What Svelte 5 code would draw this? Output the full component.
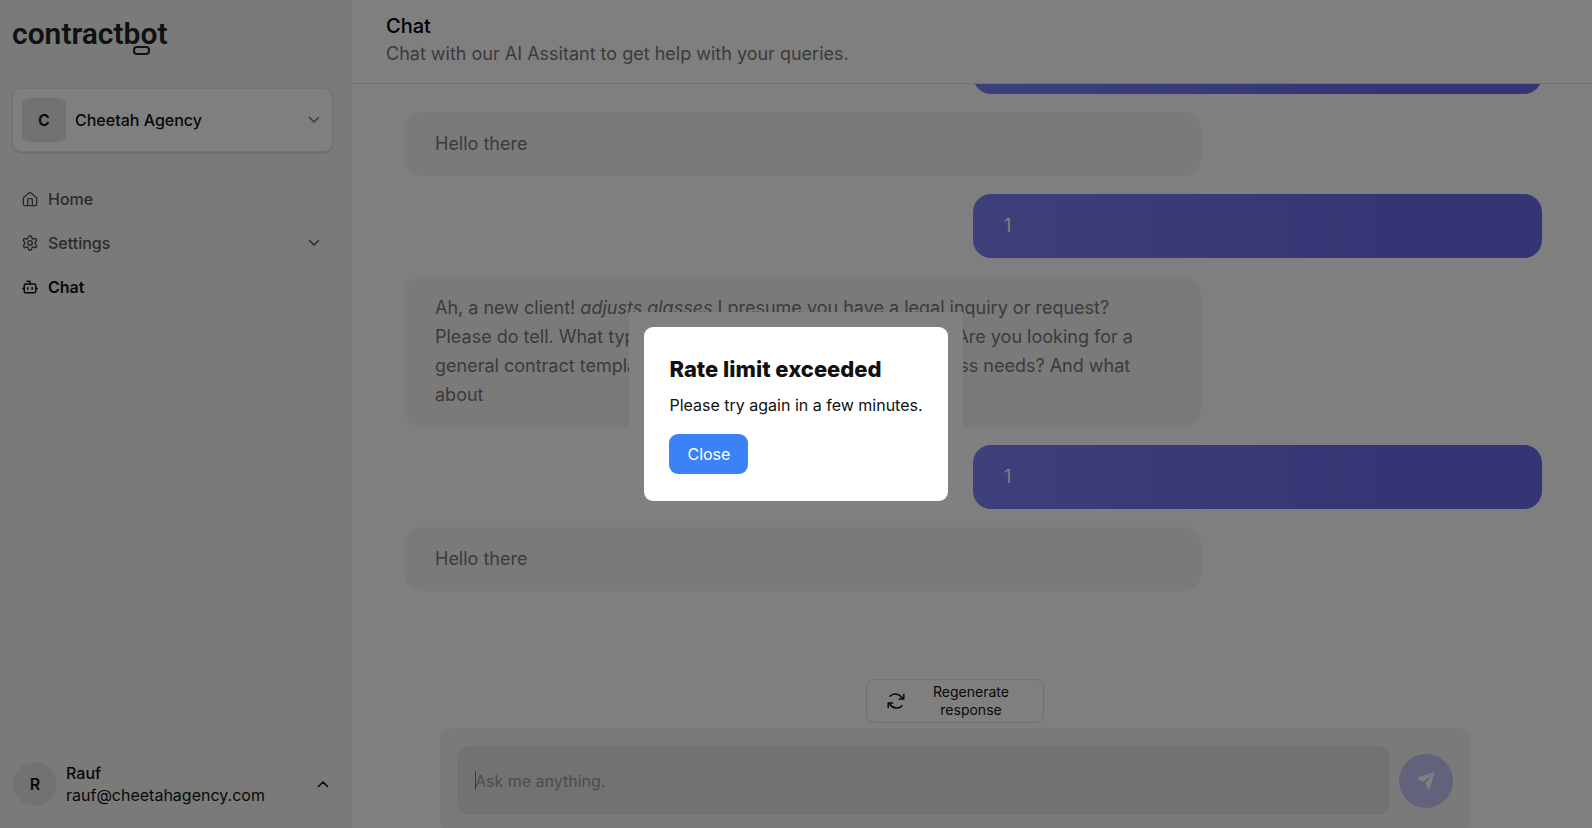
<script lang="ts">
  interface Message {
    from: 'bot' | 'user';
    text: string;
    emphasis?: string;
    rest?: string;
  }

  const messages: Message[] = [
    { from: 'user', text: '1' },
    { from: 'bot', text: 'Hello there' },
    { from: 'user', text: '1' },
    {
      from: 'bot',
      text: 'Ah, a new client! ',
      emphasis: 'adjusts glasses',
      rest: ' I presume you have a legal inquiry or request? Please do tell. What type of agreement do you need drafted? Are you looking for a general contract template or one tailored to your exact business needs? And what about'
    },
    { from: 'user', text: '1' },
    { from: 'bot', text: 'Hello there' }
  ];

  let prompt = '';
  let limited = true;
</script>

<div class="app">
  <aside class="sidebar">
    <a class="logo" href="/">contractb<span class="logo-face">o</span>t</a>

    <button class="agency" type="button">
      <span class="agency-badge">C</span>
      <span class="agency-name">Cheetah Agency</span>
      <svg class="chevron" viewBox="0 0 12 12"><path d="M1.5 3.5 6 8l4.5-4.5" /></svg>
    </button>

    <nav>
      <a class="nav-item" href="/home">
        <svg viewBox="0 0 24 24">
          <path d="M2 10.2 12 1.8l10 8.4V20a2 2 0 0 1-2 2H4a2 2 0 0 1-2-2z" />
          <path d="M8.5 22v-9a1.5 1.5 0 0 1 1.5-1.5h4a1.5 1.5 0 0 1 1.5 1.5v9" />
        </svg>
        <span>Home</span>
      </a>
      <a class="nav-item" href="/settings">
        <svg viewBox="1 1 22 22">
          <path
            d="M12.22 2h-.44a2 2 0 0 0-2 2v.18a2 2 0 0 1-1 1.73l-.43.25a2 2 0 0 1-2 0l-.15-.08a2 2 0 0 0-2.73.73l-.22.38a2 2 0 0 0 .73 2.73l.15.1a2 2 0 0 1 1 1.72v.51a2 2 0 0 1-1 1.74l-.15.09a2 2 0 0 0-.73 2.73l.22.38a2 2 0 0 0 2.73.73l.15-.08a2 2 0 0 1 2 0l.43.25a2 2 0 0 1 1 1.73V20a2 2 0 0 0 2 2h.44a2 2 0 0 0 2-2v-.18a2 2 0 0 1 1-1.73l.43-.25a2 2 0 0 1 2 0l.15.08a2 2 0 0 0 2.73-.73l.22-.39a2 2 0 0 0-.73-2.73l-.15-.08a2 2 0 0 1-1-1.74v-.5a2 2 0 0 1 1-1.74l.15-.09a2 2 0 0 0 .73-2.73l-.22-.38a2 2 0 0 0-2.73-.73l-.15.08a2 2 0 0 1-2 0l-.43-.25a2 2 0 0 1-1-1.73V4a2 2 0 0 0-2-2z"
          />
          <circle cx="12" cy="12" r="3" />
        </svg>
        <span>Settings</span>
        <svg class="chevron" viewBox="0 0 12 12"><path d="M1.5 3.5 6 8l4.5-4.5" /></svg>
      </a>
      <a class="nav-item active" href="/chat" aria-current="page">
        <svg viewBox="1 1 22 22">
          <path d="M12 8V4H8" />
          <rect x="4" y="8" width="16" height="12" rx="2" />
          <path d="M2 14h2M20 14h2M15 13v2M9 13v2" />
        </svg>
        <span>Chat</span>
      </a>
    </nav>

    <button class="user" type="button">
      <span class="user-badge">R</span>
      <span class="user-text">
        <span class="user-name">Rauf</span>
        <span>rauf@cheetahagency.com</span>
      </span>
      <svg class="chevron" viewBox="0 0 12 12"><path d="M1.5 8.5 6 4l4.5 4.5" /></svg>
    </button>
  </aside>

  <main>
    <header>
      <h1>Chat</h1>
      <p>Chat with our AI Assitant to get help with your queries.</p>
    </header>

    <div class="messages">
      {#each messages as message}
        <div class="bubble {message.from}">
          {message.text}{#if message.emphasis}<em>{message.emphasis}</em>{message.rest}{/if}
        </div>
      {/each}
    </div>

    <footer>
      <button class="regenerate" type="button">
        <svg viewBox="0 0 18 18">
          <path d="M3 4.200C6 .8 11.500 1 15.200 5.800M16.800 2.500V7h-4.500" />
          <path d="M15 13.800c-3 3.400-8.500 3.200-12.200-1.600M1.200 15.500V11h4.500" />
        </svg>
        <span>Regenerate response</span>
      </button>
      <form class="composer" on:submit|preventDefault>
        <div class="prompt">
          <input aria-label="Message" placeholder="Ask me anything." bind:value={prompt} />
        </div>
        <button class="send" type="submit" aria-label="Send">
          <svg viewBox="0 0 18 18">
            <path
              d="M16.200.6 1.300 5.300C.2 5.700.2 7 1.200 7.500l4 1.700c1 .4 1.800.2 2.500-.5l4.200-3.300c.6-.5 1.300.2.800.8L9.200 10c-.6.7-.8 1.500-.4 2.400l1.600 4.100c.4 1 1.700 1 2.100 0L17.400 1.800c.3-.8-.4-1.500-1.200-1.200z"
            />
          </svg>
        </button>
      </form>
    </footer>
  </main>
</div>

{#if limited}
  <div class="overlay">
    <div class="dialog-frame">
      <div class="dialog" role="alertdialog" aria-labelledby="limit-title" aria-describedby="limit-text">
        <h2 id="limit-title">Rate limit exceeded</h2>
        <p id="limit-text">Please try again in a few minutes.</p>
        <button type="button" on:click={() => (limited = false)}>Close</button>
      </div>
    </div>
  </div>
{/if}

<style>
  :global(body) {
    background: #fff;
    font-family: Inter, 'Liberation Sans', sans-serif;
  }
  button,
  input {
    border: 0;
    font: inherit;
    color: inherit;
  }
  a {
    color: inherit;
    text-decoration: none;
  }
  h1,
  h2,
  p {
    margin: 0;
  }
  svg {
    flex: none;
    fill: none;
    stroke: currentColor;
    stroke-linecap: round;
    stroke-linejoin: round;
    stroke-width: 2;
  }
  .app {
    display: flex;
    height: 100vh;
    overflow: hidden;
    font-size: 16px;
    line-height: 22px;
  }
  .sidebar {
    display: flex;
    flex: none;
    flex-direction: column;
    box-sizing: border-box;
    width: 351px;
    padding: 16px 17px 22px 12px;
    border-right: 1px solid #e5e5e5;
    background: #f5f5f5;
    color: #111;
  }
  .logo {
    align-self: flex-start;
    margin-bottom: 36px;
    font-family: Roboto, sans-serif;
    font-size: 30px;
    font-weight: 600;
    line-height: 36px;
    color: #222;
  }
  .logo-face {
    position: relative;
  }
  .logo-face::after {
    content: '';
    position: absolute;
    top: 30px;
    left: -7px;
    box-sizing: border-box;
    width: 17px;
    height: 9px;
    border: 2px solid #222;
    border-radius: 4px;
  }
  .chevron {
    width: 12px;
    height: 12px;
    margin-left: auto;
    stroke-width: 1.5;
  }
  .agency {
    display: flex;
    align-items: center;
    gap: 9px;
    padding: 9px 12px 9px 9px;
    border: 1px solid #e5e5e5;
    border-radius: 9px;
    background: #fff;
    box-shadow: 0 1px 2px rgba(0, 0, 0, 0.16);
    font-weight: 500;
    text-align: left;
  }
  .agency .chevron {
    color: #777;
  }
  .agency-badge {
    width: 44px;
    border-radius: 7px;
    background: #e5e5e5;
    font-weight: 600;
    line-height: 44px;
    text-align: center;
  }
  nav {
    display: grid;
    margin-top: 25px;
  }
  .nav-item {
    display: flex;
    align-items: center;
    gap: 10px;
    height: 44px;
    padding: 0 13px 0 10px;
    color: #555;
    font-weight: 500;
  }
  .nav-item > svg:first-child {
    width: 16px;
    height: 16px;
  }
  .nav-item.active {
    color: #111;
    font-weight: 600;
  }
  .user {
    display: flex;
    align-items: center;
    gap: 9px;
    margin-top: auto;
    padding: 0 4px 0 1px;
    background: none;
    text-align: left;
  }
  .user-badge {
    width: 44px;
    border-radius: 50%;
    background: #e5e5e5;
    font-weight: 600;
    line-height: 44px;
    text-align: center;
  }
  .user-text {
    display: grid;
  }
  .user-name {
    font-weight: 500;
  }
  main {
    display: flex;
    flex: 1;
    flex-direction: column;
    min-width: 0;
  }
  header {
    padding: 12px 35px 15px;
    border-bottom: 1px solid #e5e5e5;
  }
  h1 {
    font-size: 20px;
    font-weight: 500;
    line-height: 28px;
  }
  header p {
    color: #777;
    font-size: 18px;
    line-height: 28px;
  }
  .messages {
    display: flex;
    flex: 1;
    flex-direction: column;
    justify-content: flex-end;
    gap: 18px;
    min-height: 0;
    overflow: hidden;
    padding: 0 50px 88px 53px;
  }
  .bubble {
    flex: none;
    box-sizing: border-box;
    padding: 17px 31px 18px;
    border-radius: 18px;
    font-size: 18px;
    line-height: 29px;
  }
  .bubble.bot {
    width: 70%;
    background: #f5f5f5;
    color: #777;
  }
  .bubble.user {
    align-self: flex-end;
    width: 50%;
    background: linear-gradient(90deg, #7a80f4, #6a6aea 75%);
    color: #fff;
  }
  footer {
    display: flex;
    flex-direction: column;
    align-items: center;
    gap: 5px;
    /* the composer tucks under the bottom edge of the window */
    margin-bottom: -5px;
    padding: 0 122px 0 89px;
  }
  .regenerate {
    display: flex;
    align-items: center;
    gap: 18px;
    width: 178px;
    padding: 3px 24px 3px 20px;
    border: 1px solid #e0e0e0;
    border-radius: 8px;
    background: #fff;
    color: #111;
    font-size: 14px;
    line-height: 18px;
  }
  .regenerate svg {
    width: 18px;
    height: 18px;
    stroke-width: 1.5;
  }
  .regenerate span {
    flex: 1;
  }
  .composer {
    display: flex;
    align-items: center;
    gap: 9px;
    box-sizing: border-box;
    width: 100%;
    padding: 18px 17px;
    border-radius: 12px;
    background: #f5f5f5;
  }
  .prompt {
    position: relative;
    flex: 1;
  }
  .prompt::before {
    content: '';
    position: absolute;
    top: 25px;
    left: 18px;
    width: 1px;
    height: 19px;
    background: #777;
  }
  .prompt input {
    display: block;
    box-sizing: border-box;
    width: 100%;
    height: 69px;
    padding: 0 18px;
    border-radius: 12px;
    background: #e5e5e5;
  }
  .prompt input::placeholder {
    color: #999;
  }
  .send {
    display: grid;
    flex: none;
    place-items: center;
    width: 54px;
    height: 54px;
    padding: 0;
    border-radius: 50%;
    background: #c4c5f8;
    color: #fff;
  }
  .send svg {
    width: 18px;
    height: 18px;
    fill: currentColor;
    stroke: none;
  }
  .overlay {
    position: fixed;
    inset: 0;
    display: grid;
    place-items: center;
    background: rgba(0, 0, 0, 0.5);
  }
  .dialog-frame {
    padding: 15px;
    background: #808080;
  }
  .dialog {
    padding: 27px 25px;
    border-radius: 9px;
    background: #fff;
    color: #111;
  }
  h2 {
    margin-bottom: 9px;
    font-size: 22px;
    font-weight: 800;
    line-height: 30px;
  }
  .dialog p {
    margin-bottom: 17px;
    font-size: 16px;
    line-height: 24px;
  }
  .dialog button {
    padding: 8px 18px;
    border-radius: 9px;
    background: #3b82f6;
    color: #fff;
    font-size: 16px;
    line-height: 24px;
  }
</style>
